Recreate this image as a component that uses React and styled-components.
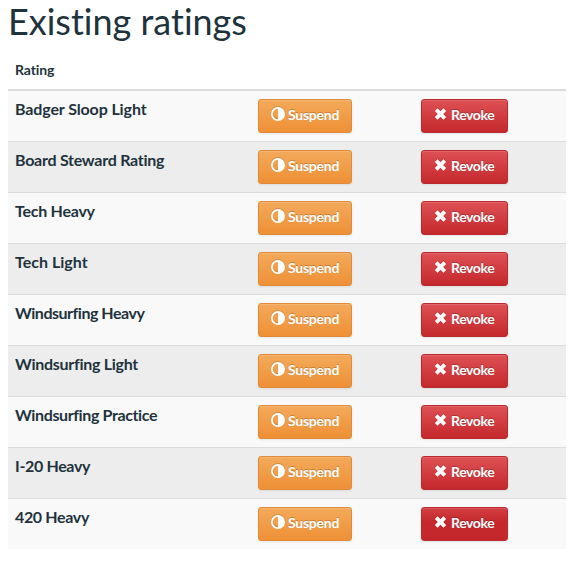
import styled, { createGlobalStyle, css } from "styled-components";

const ratings = [
  { name: "Badger Sloop Light", spacing: "-0.12px" },
  { name: "Board Steward Rating", spacing: "-0.26px" },
  { name: "Tech Heavy", spacing: "-0.25px" },
  { name: "Tech Light", spacing: "0.02px" },
  { name: "Windsurfing Heavy", spacing: "-0.48px" },
  { name: "Windsurfing Light", spacing: "-0.28px" },
  { name: "Windsurfing Practice", spacing: "-0.38px" },
  { name: "I-20 Heavy", spacing: "-0.35px" },
  { name: "420 Heavy", spacing: "-0.35px" },
];

const SuspendIcon = () => (
  <Icon width="14" height="14" viewBox="0 0 14 14">
    <circle cx="7" cy="7" r="6.1" fill="none" stroke="#fff" strokeWidth="1.8" />
    <path d="M7 1a6 6 0 0 1 0 12z" fill="#fff" />
  </Icon>
);

const RevokeIcon = () => (
  <Icon width="13" height="14" viewBox="0 0 13 14">
    <path d="M2.2 2.7l8.6 8.6M10.8 2.7l-8.6 8.6" stroke="#fff" strokeWidth="3.8" />
  </Icon>
);

export default function App() {
  return (
    <>
      <GlobalStyle />
      <Page>
        <Title>Existing ratings</Title>
        <Table>
          <thead>
            <tr>
              <HeadCell $width="235px">Rating</HeadCell>
              <HeadCell $width="163px" />
              <HeadCell />
            </tr>
          </thead>
          <tbody>
            {ratings.map((rating, i) => (
              <Row key={rating.name}>
                <Cell>
                  <Name $spacing={rating.spacing}>{rating.name}</Name>
                </Cell>
                <Cell>
                  <Button $width="94px">
                    <SuspendIcon />
                    <Label $spacing="-0.25px">Suspend</Label>
                  </Button>
                </Cell>
                <Cell>
                  <Button $width="87px" $danger $active={i === ratings.length - 1}>
                    <RevokeIcon />
                    <Label $spacing="-0.4px">Revoke</Label>
                  </Button>
                </Cell>
              </Row>
            ))}
          </tbody>
        </Table>
      </Page>
    </>
  );
}

const GlobalStyle = createGlobalStyle`
  body {
    margin: 0;
    background: #fff;
    color: #1f333d;
    font-family: Lato, "Open Sans", sans-serif;
  }
`;

const Page = styled.div`
  width: 558px;
  margin-left: 8px;
`;

const Title = styled.h1`
  margin: 0;
  height: 53px;
  font-size: 36px;
  font-weight: 400;
  line-height: 43px;
  letter-spacing: 0;
  font-variant-ligatures: none;
  white-space: nowrap;
`;

const Table = styled.table`
  width: 100%;
  table-layout: fixed;
  border-collapse: separate;
  border-spacing: 0;
`;

const HeadCell = styled.th`
  box-sizing: border-box;
  width: ${({ $width }) => $width || "auto"};
  height: 38px;
  padding: 0 7px 2px;
  border-bottom: 2px solid #dcdcdc;
  font-size: 14px;
  line-height: 20px;
  letter-spacing: -0.1px;
  text-align: left;
`;

const Cell = styled.td`
  box-sizing: border-box;
  height: 50px;
  padding: 8px 0 8px 15px;
  vertical-align: top;

  &:first-child {
    padding-left: 7px;
  }
`;

const Row = styled.tr`
  background: #f9f9f9;

  &:nth-child(even) {
    background: #ededed;
  }

  & + & ${Cell} {
    height: 51px;
    border-top: 1px solid #dcdcdc;
  }
`;

const Name = styled.div`
  font-size: 16px;
  font-weight: 700;
  line-height: 20px;
  letter-spacing: ${({ $spacing }) => $spacing};
  white-space: nowrap;
`;

const Button = styled.button`
  display: flex;
  align-items: center;
  gap: 3px;
  box-sizing: border-box;
  width: ${({ $width }) => $width};
  height: 34px;
  padding: 0 0 0 12px;
  border: 1px solid #e08b37;
  border-radius: 3px;
  background: linear-gradient(#f3aa5b, #ee9036);
  box-shadow: inset 0 1px 0 rgba(255, 255, 255, 0.13), 0 1px 2px rgba(0, 0, 0, 0.08);
  color: #fff;
  font-family: inherit;
  font-size: 14px;
  font-weight: 700;
  text-shadow: 0 -1px 0 rgba(0, 0, 0, 0.22);

  ${({ $danger }) =>
    $danger &&
    css`
      gap: 4px;
      border-color: #b9292e;
      background: linear-gradient(#de5154, #c4282d);
    `}

  ${({ $active }) =>
    $active &&
    css`
      background: linear-gradient(#d23e42, #c4282d 45%);
    `}
`;

const Icon = styled.svg`
  flex: none;
  margin-bottom: 4px;
  filter: drop-shadow(0 -1px 0 rgba(0, 0, 0, 0.15));
`;

const Label = styled.span`
  letter-spacing: ${({ $spacing }) => $spacing};
  line-height: 20px;
  padding-bottom: 2px;
`;
